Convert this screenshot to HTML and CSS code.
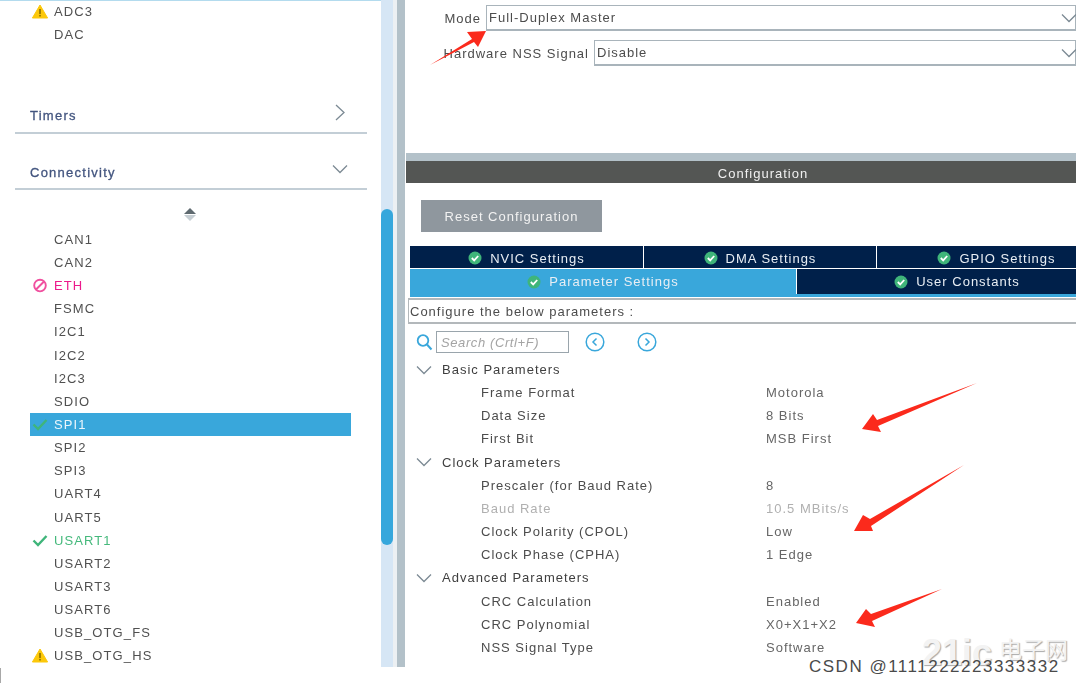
FILE: index.html
```html
<!DOCTYPE html>
<html lang="en">
  <head>
    <meta charset="UTF-8" />
    <title>SPI1 Mode and Configuration</title>
    <link rel="stylesheet" href="styles.css">
  </head>

  <body>
    <svg class="defs" width="0" height="0">
      <symbol id="warn" viewBox="0 0 16 14">
        <path d="M8 0.5 L15.6 13.5 H0.4 Z" fill="#fcc80a" stroke="#fcc80a" stroke-linejoin="round" />
        <rect x="7.2" y="4.5" width="1.6" height="5" fill="#8a7000" />
        <rect x="7.2" y="10.4" width="1.6" height="1.6" fill="#8a7000" />
      </symbol>
      <symbol id="check" viewBox="0 0 16 14">
        <path d="M1.5 7 L6 11.5 L14.5 2.5" fill="none" stroke="#3fb57a" stroke-width="2.4" />
      </symbol>
      <symbol id="ban" viewBox="0 0 16 16">
        <circle cx="8" cy="8" r="6.2" fill="none" stroke="#f0509f" stroke-width="2" />
        <path d="M4 12 L12 4" stroke="#f0509f" stroke-width="2" />
      </symbol>
      <symbol id="ok" viewBox="0 0 14 14">
        <circle cx="7" cy="7" r="6.5" fill="#3fb57a" />
        <path d="M3.8 7 L6.2 9.4 L10.2 5" fill="none" stroke="#fff" stroke-width="1.8" />
      </symbol>
      <symbol id="down" viewBox="0 0 16 10">
        <path d="M1 1.5 L8 8.5 L15 1.5" fill="none" stroke="#7c8a94" stroke-width="1.3" />
      </symbol>
    </svg>

    <div class="window">
      <div class="sidebar">
        <div class="side-row"><svg class="side-icon"><use href="#warn" /></svg>ADC3</div>
        <div class="side-row"><span class="side-icon"></span>DAC</div>

        <div class="group-head group-timers">
          <span>Timers</span>
          <svg class="group-arrow" width="10" height="17" viewBox="0 0 10 17"><path d="M1 1 L9 8.500 L1 16" fill="none" stroke="#7c8a94" stroke-width="1.300" /></svg>
        </div>
        <div class="group-head group-conn">
          <span>Connectivity</span>
          <svg class="group-arrow" width="16" height="10"><use href="#down" /></svg>
        </div>

        <div class="sorter">
          <span class="sort-up"></span>
          <span class="sort-down"></span>
        </div>

        <div class="side-row"><span class="side-icon"></span>CAN1</div>
        <div class="side-row"><span class="side-icon"></span>CAN2</div>
        <div class="side-row eth"><svg class="side-icon"><use href="#ban" /></svg>ETH</div>
        <div class="side-row"><span class="side-icon"></span>FSMC</div>
        <div class="side-row"><span class="side-icon"></span>I2C1</div>
        <div class="side-row"><span class="side-icon"></span>I2C2</div>
        <div class="side-row"><span class="side-icon"></span>I2C3</div>
        <div class="side-row"><span class="side-icon"></span>SDIO</div>
        <div class="side-row selected"><svg class="side-icon"><use href="#check" /></svg>SPI1</div>
        <div class="side-row"><span class="side-icon"></span>SPI2</div>
        <div class="side-row"><span class="side-icon"></span>SPI3</div>
        <div class="side-row"><span class="side-icon"></span>UART4</div>
        <div class="side-row"><span class="side-icon"></span>UART5</div>
        <div class="side-row usart"><svg class="side-icon"><use href="#check" /></svg>USART1</div>
        <div class="side-row"><span class="side-icon"></span>USART2</div>
        <div class="side-row"><span class="side-icon"></span>USART3</div>
        <div class="side-row"><span class="side-icon"></span>USART6</div>
        <div class="side-row"><span class="side-icon"></span>USB_OTG_FS</div>
        <div class="side-row"><svg class="side-icon"><use href="#warn" /></svg>USB_OTG_HS</div>
      </div>

      <div class="scroll-track"><div class="scroll-thumb"></div></div>
      <div class="gutter"></div>

      <div class="main">
        <div class="mode-panel">
          <div class="mode-row">
            <label class="mode-label mode-label-first">Mode</label>
            <div class="select">Full-Duplex Master<svg class="select-arrow" width="16" height="10"><use href="#down" /></svg></div>
          </div>
          <div class="mode-row">
            <label class="mode-label mode-label-second">Hardware NSS Signal</label>
            <div class="select">Disable<svg class="select-arrow" width="16" height="10"><use href="#down" /></svg></div>
          </div>
        </div>

        <div class="config-title">Configuration</div>

        <div class="config-body">
          <button class="reset-btn">Reset Configuration</button>

          <div class="tabs tabs-top">
            <div class="tab tab-nvic"><svg class="tab-icon"><use href="#ok" /></svg>NVIC Settings</div>
            <div class="tab tab-dma"><svg class="tab-icon"><use href="#ok" /></svg>DMA Settings</div>
            <div class="tab tab-gpio"><svg class="tab-icon"><use href="#ok" /></svg>GPIO Settings</div>
          </div>
          <div class="tabs tabs-bottom">
            <div class="tab tab-param"><svg class="tab-icon"><use href="#ok" /></svg>Parameter Settings</div>
            <div class="tab tab-user"><svg class="tab-icon"><use href="#ok" /></svg>User Constants</div>
          </div>

          <div class="configure-box">Configure the below parameters :</div>

          <div class="search-row">
            <svg class="search-icon" width="17" height="18" viewBox="0 0 17 18">
              <circle cx="7" cy="7.500" r="5.300" fill="none" stroke="#39a7db" stroke-width="1.800" />
              <path d="M11 11.500 L15.500 16.500" stroke="#39a7db" stroke-width="2" />
            </svg>
            <div class="search-box">Search (Crtl+F)</div>
            <svg class="nav-btn nav-prev" width="20" height="20" viewBox="0 0 20 20">
              <circle cx="10" cy="10" r="8.800" fill="none" stroke="#39a7db" stroke-width="1.500" />
              <path d="M11.500 6.500 L8 10 L11.500 13.500" fill="none" stroke="#39a7db" stroke-width="1.500" />
            </svg>
            <svg class="nav-btn nav-next" width="20" height="20" viewBox="0 0 20 20">
              <circle cx="10" cy="10" r="8.800" fill="none" stroke="#39a7db" stroke-width="1.500" />
              <path d="M8.500 6.500 L12 10 L8.500 13.500" fill="none" stroke="#39a7db" stroke-width="1.500" />
            </svg>
          </div>

          <div class="tree">
            <div class="tree-head"><svg class="tree-arrow" width="16" height="10"><use href="#down" /></svg>Basic Parameters</div>
            <div class="param"><span>Frame Format</span><span class="value">Motorola</span></div>
            <div class="param"><span>Data Size</span><span class="value">8 Bits</span></div>
            <div class="param"><span>First Bit</span><span class="value">MSB First</span></div>
            <div class="tree-head"><svg class="tree-arrow" width="16" height="10"><use href="#down" /></svg>Clock Parameters</div>
            <div class="param"><span>Prescaler (for Baud Rate)</span><span class="value">8</span></div>
            <div class="param param-off"><span>Baud Rate</span><span class="value">10.5 MBits/s</span></div>
            <div class="param"><span>Clock Polarity (CPOL)</span><span class="value">Low</span></div>
            <div class="param"><span>Clock Phase (CPHA)</span><span class="value">1 Edge</span></div>
            <div class="tree-head"><svg class="tree-arrow" width="16" height="10"><use href="#down" /></svg>Advanced Parameters</div>
            <div class="param"><span>CRC Calculation</span><span class="value">Enabled</span></div>
            <div class="param"><span>CRC Polynomial</span><span class="value">X0+X1+X2</span></div>
            <div class="param"><span>NSS Signal Type</span><span class="value">Software</span></div>
          </div>
        </div>
      </div>
    </div>

    <div class="foot-mark"></div>

    <!-- red annotation arrows drawn on top of the screenshot -->
    <svg class="arrows" width="1076" height="683" viewBox="0 0 1076 683">
      <polygon points="430,65 472,39 467,32 486,31 478,47 474,42" fill="#fb2a1c" />
      <polygon points="977,383 877,420 873,414 862,429 881,432 878,426" fill="#fb2a1c" />
      <polygon points="964,465 870,519 863,515 854,531 873,531 871,526" fill="#fb2a1c" />
      <polygon points="942,589 871,614 866,609 856,623 875,627 872,621" fill="#fb2a1c" />
    </svg>

    <div class="mark-21ic">21ic<span class="mark-cn">电子网</span></div>
    <div class="mark-csdn">CSDN @1111222223333332</div>
  </body>
</html>
```

FILE: styles.css
```css
html,
body {
  margin: 0;
  padding: 0;
  background-color: #ffffff;
}

body {
  width: 1076px;
  height: 683px;
  overflow: hidden;
  position: relative;
  font-family: "Liberation Sans", Arial, sans-serif;
  font-size: 13px;
  letter-spacing: 1px;
  color: #4c4c4c;
}

.defs {
  position: absolute;
}

.window {
  display: flex;
  height: 667px;
  overflow: hidden;
  filter: blur(0.45px);
}

/* left list */
.sidebar {
  width: 381px;
  flex-shrink: 0;
  border-top: 1px solid #b3dbee;
  box-sizing: border-box;
}

.side-row {
  display: flex;
  align-items: center;
  height: 23.15px;
  margin: 0 30px;
  color: #505050;
  letter-spacing: 1.1px;
}

.side-row:first-child {
  margin-top: -1.5px;
}

.side-icon {
  display: block;
  width: 16px;
  height: 15px;
  margin: 0 6px 0 2px;
  flex-shrink: 0;
}

.side-row.eth {
  color: #ec1a8c;
}

.side-row.usart {
  color: #45b97c;
}

.side-row.selected {
  background-color: #39a7db;
  color: #eaf6fc;
}

.group-head {
  display: flex;
  justify-content: space-between;
  align-items: center;
  margin: 0 14px 0 15px;
  padding: 0 16px 0 15px;
  border-bottom: 2px solid #c3ced6;
  color: #43557f;
  letter-spacing: 1.25px;
  box-sizing: border-box;
}

.group-timers {
  height: 35px;
  margin-top: 53px;
}

.group-timers .group-arrow {
  margin: -6px 6px 0 0;
}

.group-conn {
  height: 34px;
  margin-top: 22px;
  padding-top: 2px;
}

.group-conn .group-arrow {
  margin: -8px 3px 0 0;
}

.group-head span {
  -webkit-text-stroke: 0.3px #43557f;
}

.sorter {
  display: flex;
  flex-direction: column;
  align-items: center;
  gap: 1px;
  height: 38px;
  padding-top: 18px;
  box-sizing: border-box;
  width: 379px;
}

.sort-up {
  border: 6px solid transparent;
  border-top: 0;
  border-bottom: 6px solid #5f6a70;
}

.sort-down {
  border: 6px solid transparent;
  border-bottom: 0;
  border-top: 6px solid #c6ced3;
}

.scroll-track {
  width: 12px;
  flex-shrink: 0;
  background-color: #d6e6f5;
  padding-top: 209px;
  box-sizing: border-box;
}

.scroll-thumb {
  height: 336px;
  background-color: #36a7dc;
  border-radius: 6px;
}

.gutter {
  width: 12px;
  flex-shrink: 0;
  box-sizing: border-box;
  border-left: 4px solid #ecf0f3;
  background-color: #b3c1c9;
}

.main {
  flex: 1;
  min-width: 0;
  margin-left: 1px;
}

/* top mode form */
.mode-panel {
  height: 153px;
  padding-top: 5px;
  box-sizing: border-box;
}

.mode-row {
  display: flex;
  align-items: center;
  height: 26px;
  margin-bottom: 9px;
}

.mode-label {
  padding-right: 5px;
  white-space: nowrap;
  text-align: right;
  box-sizing: border-box;
}

.mode-label-first {
  width: 80px;
}

.mode-label-second {
  width: 188px;
}

.select {
  flex: 1;
  height: 26px;
  line-height: 24px;
  box-sizing: border-box;
  border: 1px solid #a9b4bb;
  border-bottom-width: 2px;
  padding-left: 2px;
  position: relative;
}

.select-arrow {
  position: absolute;
  right: -2px;
  top: 7px;
}

.config-title {
  height: 30px;
  box-sizing: border-box;
  border-top: 8px solid #b3c1c9;
  background-color: #545654;
  color: #f0f0f0;
  text-align: center;
  line-height: 25px;
  padding-left: 44px;
}

.config-body {
  padding-top: 17px;
}

.reset-btn {
  display: block;
  width: 181px;
  height: 32px;
  margin-left: 15px;
  background-color: #8f979e;
  color: #f2f2f2;
  border: none;
  font-family: inherit;
  font-size: 13px;
  letter-spacing: 1px;
}

.tabs {
  display: flex;
  margin-left: 4px;
  color: #e8eef4;
}

.tabs-top {
  margin-top: 14px;
  margin-bottom: 1px;
  height: 22px;
  gap: 1px;
}

.tabs-bottom {
  height: 28px;
  box-sizing: border-box;
  border-bottom: 3px solid #39a7db;
  gap: 1px;
}

.tab {
  display: flex;
  align-items: center;
  justify-content: center;
  background-color: #00204a;
  white-space: nowrap;
}

.tabs-top .tab {
  padding-top: 2px;
  box-sizing: border-box;
}

.tab-icon {
  width: 14px;
  height: 14px;
  margin-right: 8px;
  flex-shrink: 0;
}

.tab-nvic {
  width: 233px;
}

.tab-dma {
  width: 232px;
}

.tab-gpio {
  flex: 1;
  padding-left: 40px;
}

.tab-param {
  width: 386px;
  background-color: #39a7db;
}

.tab-user {
  flex: 1;
  padding-left: 41px;
}

.configure-box {
  height: 26px;
  line-height: 24px;
  margin: 1px 0 0 2px;
  box-sizing: border-box;
  border: 1px solid #b3b8bb;
  border-width: 2px 0 2px 1px;
  padding-left: 1px;
}

.search-row {
  display: flex;
  align-items: center;
  height: 22px;
  margin-top: 7px;
  padding-left: 10px;
}

.search-icon {
  flex-shrink: 0;
  margin-right: 3px;
}

.search-box {
  width: 133px;
  height: 22px;
  line-height: 22px;
  box-sizing: border-box;
  border: 1px solid #9aa5ac;
  padding-left: 4px;
  color: #a4a4a4;
  font-style: italic;
  letter-spacing: 0.6px;
}

.nav-btn {
  flex-shrink: 0;
}

.nav-prev {
  margin-left: 16px;
}

.nav-next {
  margin-left: 32px;
}

.tree {
  padding-top: 5px;
}

.tree-head {
  display: flex;
  align-items: center;
  height: 23.17px;
  padding-left: 10px;
  color: #3f3f3f;
}

.tree-arrow {
  margin-right: 10px;
  flex-shrink: 0;
}

.param {
  display: grid;
  grid-template-columns: 285px 1fr;
  height: 23.17px;
  line-height: 23px;
  padding-left: 75px;
  color: #4c4c4c;
}

.param .value {
  color: #666;
}

.param-off span,
.param-off .value {
  color: #b0b0b0;
}

.foot-mark {
  position: absolute;
  left: 0;
  top: 668px;
  width: 1px;
  height: 15px;
  background-color: #a8a8a8;
}

/* things lying over the screenshot */
.arrows {
  position: absolute;
  left: 0;
  top: 0;
}

.mark-21ic {
  position: absolute;
  left: 922px;
  top: 632px;
  font-size: 36px;
  font-weight: bold;
  letter-spacing: 0;
  color: #f3f3f3;
  text-shadow: 1px 1px 1px #a8a8a8;
  white-space: nowrap;
}

.mark-cn {
  font-family: "Noto Sans CJK SC", sans-serif;
  font-size: 23px;
  font-weight: normal;
  margin-left: 7px;
  position: relative;
  top: -7px;
}

.mark-csdn {
  position: absolute;
  left: 809px;
  top: 657px;
  font-size: 17px;
  letter-spacing: 1.5px;
  color: #4a4a4a;
  white-space: nowrap;
}
```
